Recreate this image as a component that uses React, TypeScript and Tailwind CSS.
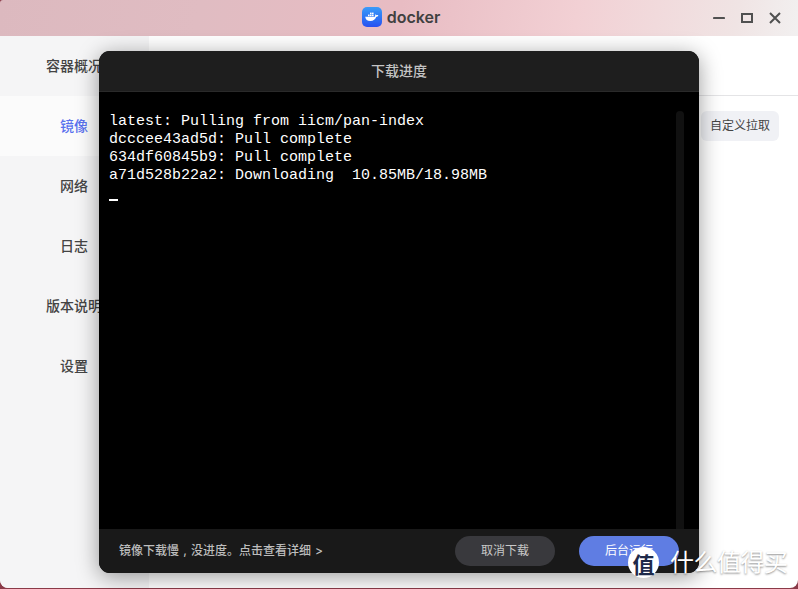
import { useState } from "react";

const cjk = "font-['Inter','Noto_Sans_CJK_SC',sans-serif]";

const navItems = ["容器概况", "镜像", "网络", "日志", "版本说明", "设置"];

function DockerLogo() {
  return (
    <div className="w-5 h-5 rounded-[5px] bg-gradient-to-b from-[#3b9bf8] to-[#2a4ff0] flex items-center justify-center">
      <svg viewBox="0 0 20 20" className="w-4 h-4" fill="#fff">
        <rect x="5" y="7" width="2" height="2" />
        <rect x="7.5" y="7" width="2" height="2" />
        <rect x="10" y="7" width="2" height="2" />
        <rect x="7.5" y="4.5" width="2" height="2" />
        <rect x="10" y="4.5" width="2" height="2" />
        <path d="M1.5 9.6h12.2c.5-1 .4-2 0-2.8.9-.2 1.5.3 1.9 1 .8-.3 1.6-.2 2.4.3-.6 1.2-1.6 1.6-2.7 1.6-1 3.2-3.5 5.3-7.4 5.3-4 0-6-2-6.4-5.4z" />
      </svg>
    </div>
  );
}

function Sidebar() {
  const [active] = useState("镜像");
  return (
    <div className="w-[149px] shrink-0 bg-[#f5f5f6] rounded-bl-lg">
      {navItems.map((item) => (
        <div
          key={item}
          className={
            "h-[60px] pb-[2px] pr-[1px] flex items-center justify-center text-[14px] font-medium whitespace-nowrap " +
            (item === active ? "bg-[#fbfbfb] text-[#5a72ee]" : "text-[#444]")
          }
        >
          {item}
        </div>
      ))}
    </div>
  );
}

function ProgressDialog() {
  return (
    <div className="absolute left-[99px] top-[51px] w-[600px] h-[522px] rounded-[11px] overflow-hidden bg-black flex flex-col shadow-[0_4px_22px_rgba(0,0,0,0.4)]">
      <div className="h-[41px] shrink-0 pb-[2px] bg-[#1e1e1e] border-b border-[#2a2a2a] flex items-center justify-center text-[14px] font-medium text-[#c4c4c4]">
        下载进度
      </div>
      <div className="flex-1 flex min-h-0 relative">
        <div className="flex-1 pl-[10px] pt-[21px] font-['Liberation_Mono',monospace] text-[15px] leading-[18px] text-white whitespace-pre">
          <div>latest: Pulling from iicm/pan-index</div>
          <div>dcccee43ad5d: Pull complete</div>
          <div>634df60845b9: Pull complete</div>
          <div>a71d528b22a2: Downloading  10.85MB/18.98MB</div>
          <div className="w-[9px] h-[2px] bg-white mt-[14px]" />
        </div>
        <div className="w-[8px] mr-[15px] mt-[19px] rounded-t bg-[#111]" />
      </div>
      <div className="h-[44px] shrink-0 bg-[#191919] flex items-center pl-5 pr-5">
        <div className="flex-1 text-[12px] font-medium text-[#bdbdbd]">
          镜像下载慢<span className="inline-block w-3 text-center">,</span>没进度。点击查看详细<span className="ml-[4px]">&gt;</span>
        </div>
        <button className="w-[100px] h-[30px] rounded-full bg-[#39393d] text-[12px] text-[#c8c8c8]">取消下载</button>
        <button className="w-[100px] h-[30px] rounded-full bg-[#5f7de3] text-[12px] text-white ml-6">后台运行</button>
      </div>
    </div>
  );
}

function Watermark() {
  return (
    <div className="absolute left-[628px] top-[547px] flex items-center">
      <div className="w-[31px] h-[31px] rounded-full bg-white flex items-center justify-center text-[22px] leading-none font-bold text-[#1e2a4a] font-['Noto_Sans_CJK_SC',sans-serif]">
        值
      </div>
      <div className="ml-[11px] text-[24px] leading-none tracking-[-0.5px] text-white [text-shadow:0_1px_2px_rgba(0,0,0,0.45)] whitespace-nowrap">
        什么值得买
      </div>
    </div>
  );
}

export default function App() {
  return (
    <div className={"relative w-[798px] h-[589px] overflow-hidden bg-[#8a3a48] " + cjk}>
      {/* title bar */}
      <div className="h-9 relative flex items-center justify-center rounded-tl-[3px] bg-[linear-gradient(100deg,#dcb9bf_0%,#e0bcc2_25%,#e8bcc3_50%,#f2d0d4_72%,#f0e4e4_92%,#f2f0f0_100%)]">
        <div className="flex items-center ml-[4px] mb-[3px]">
          <DockerLogo />
          <span className="ml-[5px] text-[16px] font-semibold text-[#404040]">docker</span>
        </div>
        <div className="absolute right-[17px] top-0 h-9 flex items-center gap-[16px]">
          <svg viewBox="0 0 12 12" className="w-3 h-3" stroke="#505050" strokeWidth="2.2" strokeLinecap="round" fill="none">
            <path d="M1 6h10" />
          </svg>
          <svg viewBox="0 0 12 12" className="w-3 h-3" stroke="#505050" strokeWidth="2" fill="none">
            <rect x="1" y="2" width="10" height="8" />
          </svg>
          <svg viewBox="0 0 12 12" className="w-3 h-3" stroke="#505050" strokeWidth="2" fill="none">
            <path d="M1 1l10 10M11 1L1 11" />
          </svg>
        </div>
      </div>

      {/* window body */}
      <div className="flex h-[552px] bg-white rounded-b-lg overflow-hidden">
        <Sidebar />
        <div className="flex-1 flex flex-col">
          <div className="h-[60px] border-b border-[#e4e4e6] shrink-0" />
          <div className="flex justify-end pt-[15px] pr-[19px]">
            <button className="w-[78px] h-[30px] rounded-md bg-[#f0f1f5] text-[12px] text-[#444]">自定义拉取</button>
          </div>
        </div>
      </div>

      <ProgressDialog />
      <Watermark />
    </div>
  );
}
